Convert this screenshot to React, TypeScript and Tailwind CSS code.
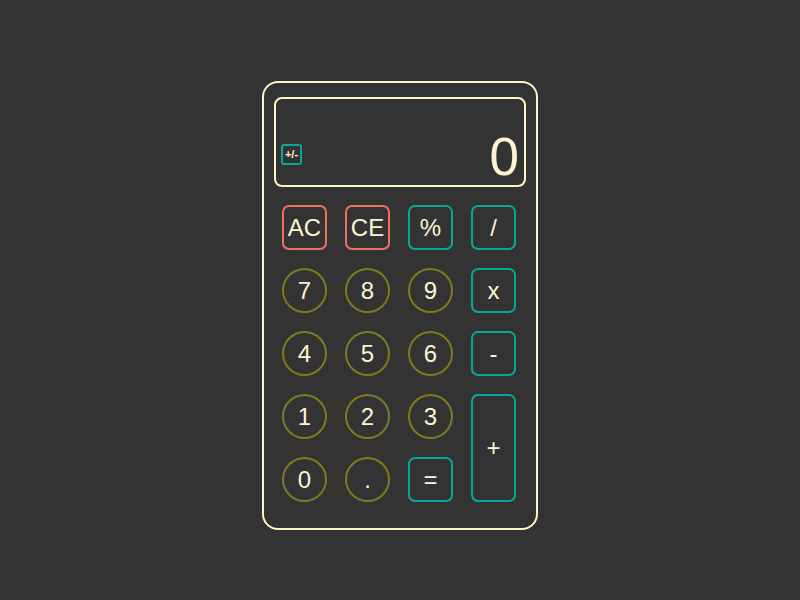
import React from "react";

const cream = "text-[#fdf3d3]";

function Rect({ label, red, className = "" }: { label: string; red?: boolean; className?: string }) {
  return (
    <div
      className={`flex items-center justify-center rounded-[7px] border-2 ${
        red ? "border-[#f0705f]" : "border-[#0aa69c]"
      } ${cream} text-[24px] ${className}`}
    >
      {label}
    </div>
  );
}

function Circle({ label }: { label: string }) {
  return (
    <div className={`flex h-[45px] w-[45px] items-center justify-center rounded-full border-2 border-[#7f7b1c] ${cream} text-[24px]`}>
      {label}
    </div>
  );
}

export default function App() {
  return (
    <div
      className="min-h-[600px] w-full bg-[#333333] pt-[81px]"
      style={{ fontFamily: '"Liberation Sans", Arial, sans-serif' }}
    >
      <div className="mx-auto w-[276px] rounded-[16px] border-2 border-[#fdf3c4] px-[10px] pb-[26px] pt-[14px]">
        <div className="flex h-[90px] items-end justify-between rounded-[8px] border-2 border-[#fdf3c4] pb-[2px] pl-[5px] pr-[5px]">
          <div className="mb-[18px] flex h-[21px] w-[21px] items-center justify-center rounded-[3px] border-2 border-[#0aa69c] text-[11px] font-bold leading-none text-[#fdf3d3]">
            +/-
          </div>
          <div className={`${cream} text-[53px] leading-none`}>0</div>
        </div>
        <div className="mt-[18px] grid grid-cols-[repeat(4,45px)] grid-rows-[repeat(5,45px)] gap-[18px] px-[8px]">
          <Rect label="AC" red />
          <Rect label="CE" red />
          <Rect label="%" />
          <Rect label="/" />
          <Circle label="7" />
          <Circle label="8" />
          <Circle label="9" />
          <Rect label="x" />
          <Circle label="4" />
          <Circle label="5" />
          <Circle label="6" />
          <Rect label="-" />
          <Circle label="1" />
          <Circle label="2" />
          <Circle label="3" />
          <Rect label="+" className="row-span-2" />
          <Circle label="0" />
          <Circle label="." />
          <Rect label="=" />
        </div>
      </div>
    </div>
  );
}
